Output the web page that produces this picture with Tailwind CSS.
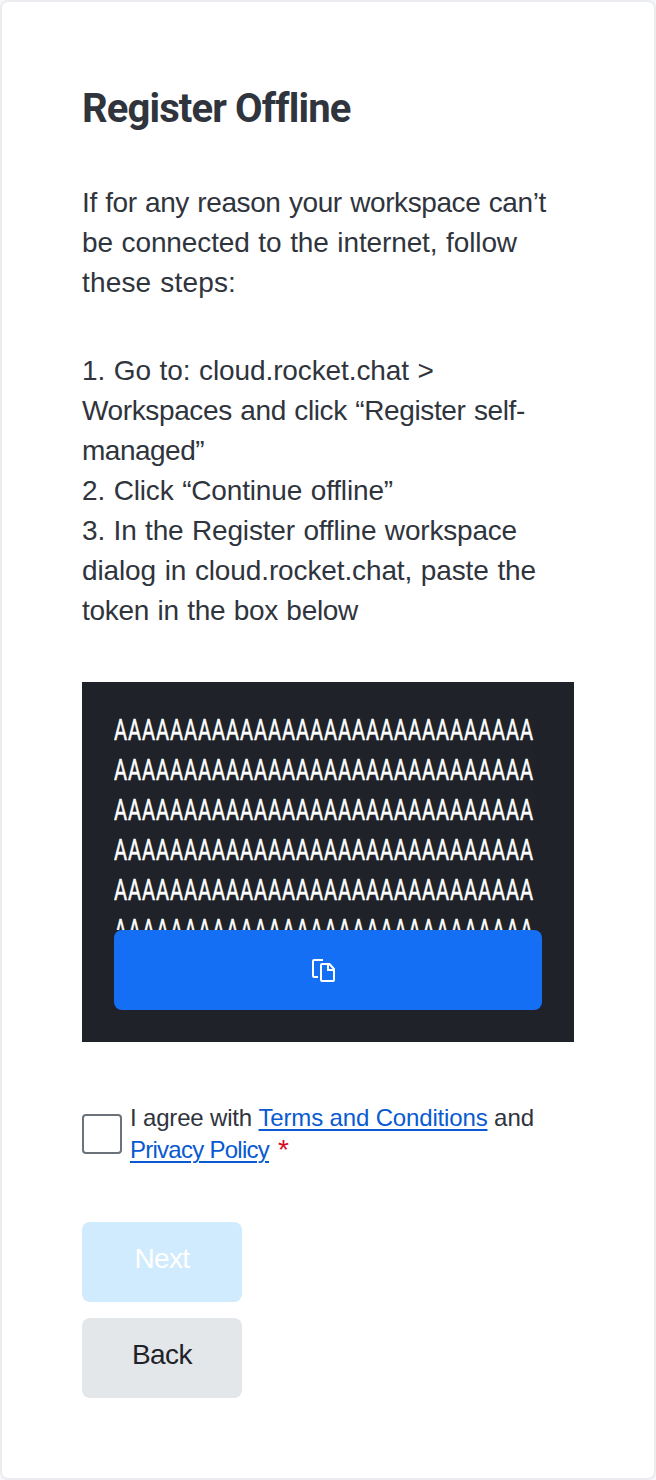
<!DOCTYPE html>
<html lang="en">
<head>
<meta charset="utf-8">
<title>Register Offline</title>
<script src="https://cdn.jsdelivr.net/npm/@tailwindcss/browser@4"></script>
</head>
<body class="bg-[#f7f8fa]">
<main class="h-[1480px] w-[656px] overflow-hidden rounded-lg border-2 border-[#ebecf0] bg-white px-20 pt-[81px] font-['Liberation_Sans',sans-serif] text-[#2f343d]">
  <h1 class="h-[100px] whitespace-nowrap font-['Roboto',sans-serif] text-[40px] leading-[52px] font-bold tracking-[-0.87px]">Register Offline</h1>
  <p class="text-[28px] leading-10 whitespace-nowrap [word-spacing:1px]">
    <span class="block tracking-[-0.4px]">If for any reason your workspace can’t</span>
    <span class="block tracking-[-0.12px]">be connected to the internet, follow</span>
    <span class="block tracking-[0.17px]">these steps:</span>
  </p>
  <div class="mt-12 text-[28px] leading-10 whitespace-nowrap [word-spacing:1px]">
    <p>
      <span class="block tracking-[-0.11px]">1. Go to: cloud.rocket.chat &gt;</span>
      <span class="block tracking-[-0.37px]">Workspaces and click “Register self-</span>
      <span class="block tracking-[-0.51px]">managed”</span>
    </p>
    <p class="tracking-[-0.16px]">2. Click “Continue offline”</p>
    <p>
      <span class="block tracking-[-0.19px]">3. In the Register offline workspace</span>
      <span class="block tracking-[-0.12px]">dialog in cloud.rocket.chat, paste the</span>
      <span class="block tracking-[-0.3px]">token in the box below</span>
    </p>
  </div>
  <section class="mt-[51px] h-[360px] w-[492px] bg-[#1f2329] p-8">
    <div class="relative h-[216px] overflow-hidden">
      <div class="-mt-1 w-[640px] origin-top-left scale-x-[0.69] font-['Roboto',sans-serif] text-[29px] leading-10 tracking-[1.37px] text-white [-webkit-text-stroke:0.5px_white]">
        <div>AAAAAAAAAAAAAAAAAAAAAAAAAAAAAA</div>
        <div>AAAAAAAAAAAAAAAAAAAAAAAAAAAAAA</div>
        <div>AAAAAAAAAAAAAAAAAAAAAAAAAAAAAA</div>
        <div>AAAAAAAAAAAAAAAAAAAAAAAAAAAAAA</div>
        <div>AAAAAAAAAAAAAAAAAAAAAAAAAAAAAA</div>
        <div>AAAAAAAAAAAAAAAAAAAAAAAAAAAAAA</div>
      </div>
      <div class="absolute top-0 right-0 h-[116px] w-2 bg-[#1e2127]"></div>
    </div>
    <button aria-label="Copy" class="flex h-20 w-full items-center rounded-lg bg-[#156ff5] pt-0.5 pl-[197px]">
      <svg class="size-6" viewBox="0 0 24 24" fill="none" stroke="white" stroke-width="2">
        <path d="M12 1H3Q2 1 2 2V17Q2 18 3 18H7"/>
        <path d="M11 5H18.5L23 10V21Q23 22 22 22H11Q10 22 10 21V6Q10 5 11 5Z"/>
        <path d="M17 5V11H23"/>
      </svg>
    </button>
  </section>
  <div class="mt-[60px] flex h-16 items-center gap-2 text-[24px] leading-8 whitespace-nowrap">
    <span role="checkbox" aria-checked="false" class="size-10 shrink-0 rounded-[4px] border-2 border-[#6c727a]"></span>
    <div>
      <div class="flex whitespace-pre"><span class="tracking-[-0.172px]">I agree with </span><a class="tracking-[-0.156px] text-[#095ad2] underline decoration-2 underline-offset-[3px]">Terms and Conditions</a><span class="tracking-[-0.05px]"> and</span></div>
      <div class="flex"><a class="tracking-[-0.741px] text-[#095ad2] underline decoration-2 underline-offset-[3px]">Privacy Policy</a><span class="ml-[9px] text-[28px] text-[#d40c26]">*</span></div>
    </div>
  </div>
  <div class="mt-[56px] flex w-40 flex-col gap-4 text-[28px]">
    <button class="h-20 rounded-lg bg-[#d1ebfe] pb-[7px] tracking-[-0.64px] text-white">Next</button>
    <button class="h-20 rounded-lg bg-[#e4e7ea] pb-[7px] tracking-[-0.56px] text-[#1f2329]">Back</button>
  </div>
</main>
</body>
</html>
